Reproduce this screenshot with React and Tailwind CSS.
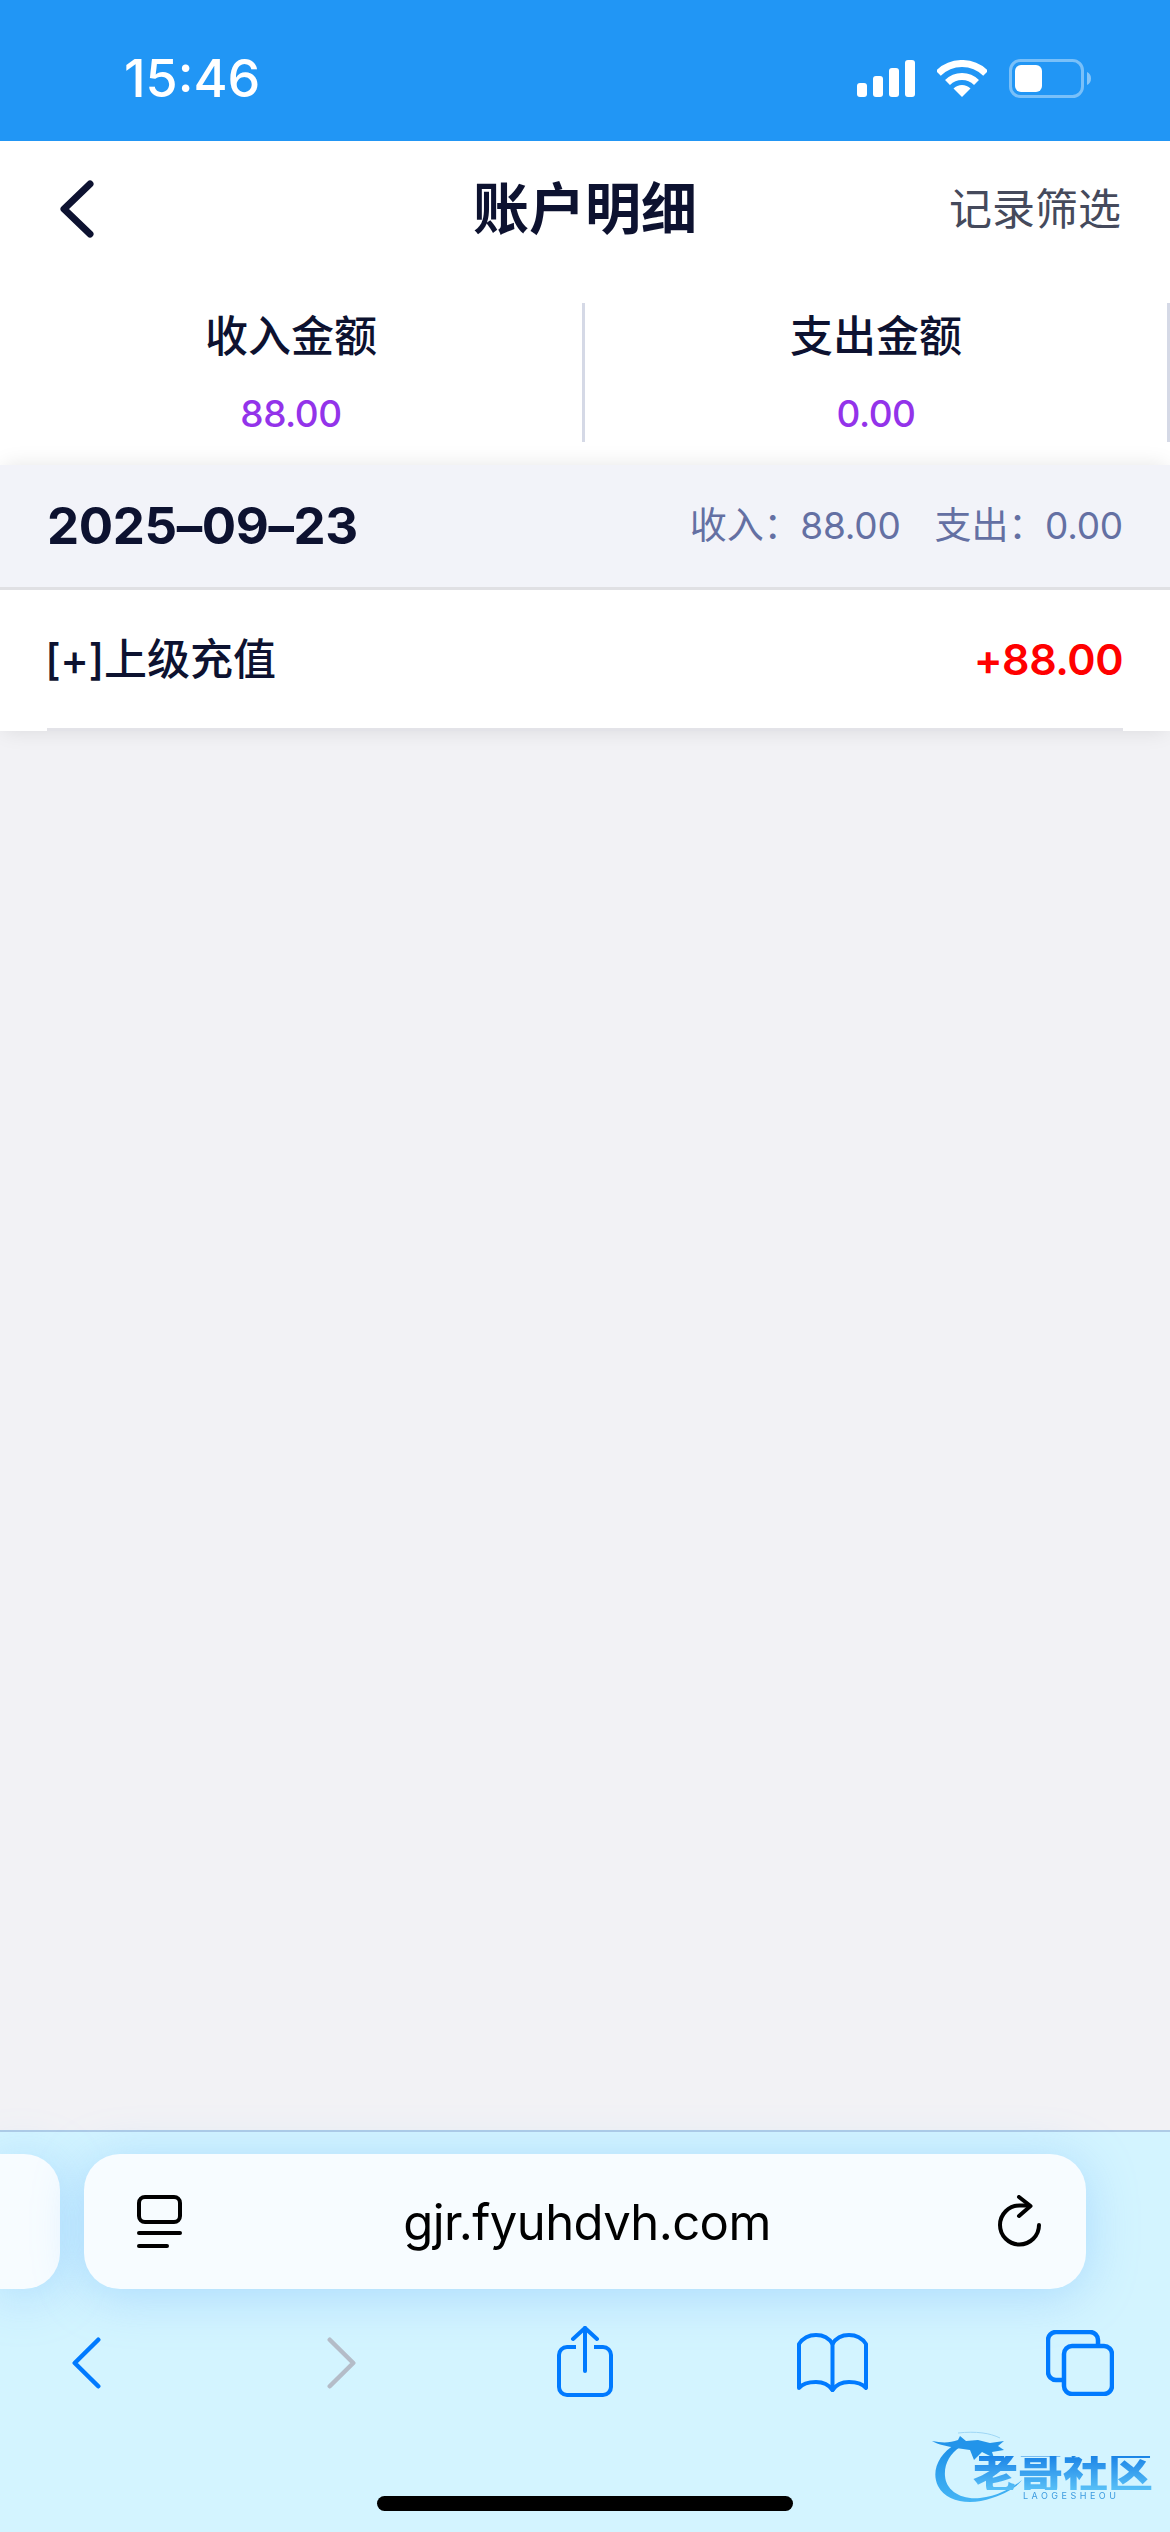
const F = { fontFamily: 'Inter, "Noto Sans CJK SC", sans-serif' };

function Signal() {
  return (
    <svg width="58" height="37" viewBox="0 0 58 37" fill="#fff">
      <rect x="0" y="23" width="10" height="14" rx="3" />
      <rect x="16" y="16" width="10" height="21" rx="3" />
      <rect x="32" y="8" width="10" height="29" rx="3" />
      <rect x="48" y="0" width="10" height="37" rx="3" />
    </svg>
  );
}

function Wifi() {
  return (
    <svg width="50" height="37" viewBox="0 0 50 37" fill="none">
      <path d="M1.3 13.3A33.5 33.5 0 0 1 48.7 13.3" stroke="#fff" strokeWidth="7" />
      <path d="M10.5 22.5A20.5 20.5 0 0 1 39.5 22.5" stroke="#fff" strokeWidth="7" />
      <path d="M25 37L16.5 28.5A12 12 0 0 1 33.5 28.5Z" fill="#fff" />
    </svg>
  );
}

function Battery() {
  return (
    <svg width="82" height="39" viewBox="0 0 82 39" fill="none">
      <rect x="1.5" y="1.5" width="72" height="36" rx="10" stroke="#fff" strokeOpacity="0.4" strokeWidth="3" />
      <rect x="6" y="6" width="27" height="27" rx="6" fill="#fff" />
      <path d="M78 13c2.5 1 4 3.500 4 6.500s-1.500 5.500-4 6.500z" fill="#fff" fillOpacity="0.45" />
    </svg>
  );
}

function IconChevron({ color, flip, width = 29, height = 52, sw = 4.5 }) {
  const m = sw / 2 + 0.5;
  const d = flip
    ? `M${m} ${m}L${width - m} ${height / 2}L${m} ${height - m}`
    : `M${width - m} ${m}L${m} ${height / 2}L${width - m} ${height - m}`;
  return (
    <svg width={width} height={height} viewBox={`0 0 ${width} ${height}`} fill="none">
      <path d={d} stroke={color} strokeWidth={sw} strokeLinecap="round" strokeLinejoin="round" />
    </svg>
  );
}

function TabsOverview() {
  return (
    <svg width="45" height="53" viewBox="0 0 45 53" fill="none" stroke="#000" strokeWidth="4" strokeLinecap="round">
      <rect x="2" y="2" width="41" height="25" rx="6" />
      <path d="M2 38H43" />
      <path d="M2 51H30" />
    </svg>
  );
}

function Reload() {
  return (
    <svg width="44" height="54" viewBox="0 0 44 54" fill="none" stroke="#000" strokeWidth="4" strokeLinecap="round" strokeLinejoin="round">
      <path d="M41 30A19.500 19.500 0 1 1 21.500 10.500H31" />
      <path d="M21 2L32.500 11L21 21" />
    </svg>
  );
}

function Share() {
  return (
    <svg width="56" height="71" viewBox="0 0 56 71" fill="none" stroke="#007aff" strokeWidth="4" strokeLinecap="round" strokeLinejoin="round">
      <path d="M19 21H10a8 8 0 0 0-8 8v32a8 8 0 0 0 8 8h36a8 8 0 0 0 8-8V29a8 8 0 0 0-8-8H37" strokeLinecap="butt" />
      <path d="M28 2V45" />
      <path d="M16 13L28 2L40 13" />
    </svg>
  );
}

function Book() {
  return (
    <svg width="71" height="60" viewBox="0 0 71 60" fill="none" stroke="#007aff" strokeWidth="4" strokeLinecap="round" strokeLinejoin="round">
      <path d="M35.500 11V57" />
      <path d="M35.500 11C32 5 26 2 19 2C12 2 6 5 2 11V55C6 50 12 49 19 49C26 49 32 52 35.500 57C39 52 45 49 52 49C59 49 65 50 69 55V11C65 5 59 2 52 2C45 2 39 5 35.500 11Z" />
    </svg>
  );
}

function Tabs() {
  return (
    <svg width="68" height="66" viewBox="0 0 68 66" fill="none" stroke="#007aff" strokeWidth="4.500">
      <path d="M16 50H10a8 8 0 0 1-8-8V10a8 8 0 0 1 8-8h34a8 8 0 0 1 8 8v5" />
      <rect x="18" y="16" width="48" height="48" rx="8" />
    </svg>
  );
}

function Watermark() {
  return (
    <div className="absolute left-[930px] top-[2430px] w-[230px] h-[80px] blur-[0.6px]">
      <svg width="100" height="78" viewBox="0 0 100 78" fill="none" className="absolute left-0 top-0">
        <defs>
          <linearGradient id="crescent" x1="0" y1="0" x2="0" y2="1">
            <stop offset="0" stopColor="#1b8fe8" />
            <stop offset="1" stopColor="#45b5f5" />
          </linearGradient>
        </defs>
        <path d="M26 14C8 24 1 42 8 56C16 72 40 76 62 68C76 63 86 58 92 50C82 58 68 66 50 68C30 70 16 60 15 46C14 34 20 24 30 17Z" fill="url(#crescent)" />
        <path d="M2 11C12 13 20 13 28 10L30 6L36 11L48 10L60 13L74 11L68 16L74 20L62 22L64 28L52 22L44 30L40 20L26 18C18 16 8 15 2 11Z" fill="#2294ea" />
        <path d="M28 3C46 1 60 3 70 8" stroke="#9ed6f5" strokeWidth="1" />
      </svg>
      <div className="absolute left-[43px] top-[26px] text-[45px] leading-[34px] font-black whitespace-nowrap bg-gradient-to-b from-[#1a84e6] to-[#58c0f7] bg-clip-text text-transparent" style={F}>
        老哥社区
      </div>
      <div className="absolute left-[93px] top-[61px] text-[9px] leading-[10px] tracking-[3.500px] text-[#3c9be0] whitespace-nowrap" style={F}>
        LAOGESHEOU
      </div>
    </div>
  );
}

export default function App() {
  return (
    <div className="relative w-[1170px] h-[2532px] flex flex-col overflow-hidden bg-[#f2f2f5]" style={F}>
      {/* status bar */}
      <div className="h-[141px] shrink-0 bg-[#2196f5] flex items-center justify-between pl-[124px] pr-[79px] pt-[16px]">
        <span className="text-[52px] leading-[60px] font-medium text-white">15:46</span>
        <div className="flex items-center gap-[22px]">
          <Signal />
          <Wifi />
          <Battery />
        </div>
      </div>

      {/* nav */}
      <div className="h-[136px] shrink-0 bg-white flex items-center justify-between pl-[60px] pr-[48px]">
        <div className="w-[161px]">
          <IconChevron color="#0d1230" width={34} height={58} sw={7} />
        </div>
        <span className="text-[56px] leading-[70px] font-bold text-[#0d1230]">账户明细</span>
        <span className="w-[173px] text-[43px] leading-[56px] text-[#454a5c] whitespace-nowrap">记录筛选</span>
      </div>

      {/* totals */}
      <div className="shrink-0 bg-white grid grid-cols-2 pt-[26px] pb-[23px]">
        <div className="h-[139px] border-r-[3px] border-[#d5d9e6] flex flex-col items-center">
          <span className="text-[43px] leading-[56px] font-medium text-[#0d1230] mt-[5px]">收入金额</span>
          <span className="text-[37px] leading-[44px] font-medium tracking-[-0.5px] text-[#9333ea] mt-[28px]">88.00</span>
        </div>
        <div className="h-[139px] border-r-[3px] border-[#d5d9e6] flex flex-col items-center">
          <span className="text-[43px] leading-[56px] font-medium text-[#0d1230] mt-[5px]">支出金额</span>
          <span className="text-[37px] leading-[44px] font-medium tracking-[-0.5px] text-[#9333ea] mt-[28px]">0.00</span>
        </div>
      </div>

      {/* list */}
      <div className="shrink-0 shadow-[0_0_20px_rgba(0,0,0,0.1)] mx-[4px] -mb-px">
        <div className="-mx-[4px] h-[125px] bg-[#f2f3f9] border-b-[3px] border-[#e0e0e4] flex items-center justify-between px-[47px]">
          <span className="text-[51px] leading-[62px] font-bold tracking-[-0.4px] text-[#0d1230]">2025–09–23</span>
          <div className="flex items-center gap-[34px] text-[37px] leading-[46px] tracking-[-0.2px] text-[#6470a3]">
            <span>收入：88.00</span>
            <span>支出：0.00</span>
          </div>
        </div>
        <div className="-mx-[4px] h-[141px] bg-white px-[47px]">
          <div className="h-full border-b-[3px] border-[#e3e3e8] flex items-center justify-between">
            <span className="text-[43px] leading-[56px] font-medium text-[#0d1230]"><span className="tracking-[-0.5px] -ml-[2px]">[+]</span>上级充值</span>
            <span className="text-[43px] leading-[54px] font-semibold tracking-[-0.5px] text-[#ff0000]">+88.00</span>
          </div>
        </div>
      </div>

      <div className="flex-1" />

      {/* browser toolbar */}
      <div className="h-[402px] shrink-0 border-t-2 border-[#aecbe6] bg-[#d3f4ff] flex flex-col">
        <div className="flex gap-[24px] pt-[22px]">
          <div className="w-[60px] h-[135px] rounded-r-[36px] bg-[#f7fcff] shadow-[0_6px_50px_rgba(110,180,250,0.4)]" />
          <div className="w-[1002px] h-[135px] rounded-[36px] bg-[#f7fcff] shadow-[0_6px_50px_rgba(110,180,250,0.4)] flex items-center justify-between pl-[53px] pr-[44px]">
            <TabsOverview />
            <span className="text-[49px] leading-[60px] tracking-[-0.6px] text-black -translate-x-[3px] translate-y-[1px]">gjr.fyuhdvh.com</span>
            <Reload />
          </div>
        </div>
        <div className="relative h-[75px] mt-[37px]">
          <div className="absolute left-[72px] top-[11px]"><IconChevron color="#007aff" /></div>
          <div className="absolute left-[327px] top-[11px]"><IconChevron color="#b4bcc8" flip /></div>
          <div className="absolute left-[557px] top-0"><Share /></div>
          <div className="absolute left-[797px] top-[7px]"><Book /></div>
          <div className="absolute left-[1046px] top-[4px]"><Tabs /></div>
        </div>
        <div className="mt-[95px] mx-auto w-[416px] h-[15px] rounded-full bg-black shrink-0" />
      </div>

      <Watermark />
    </div>
  );
}
